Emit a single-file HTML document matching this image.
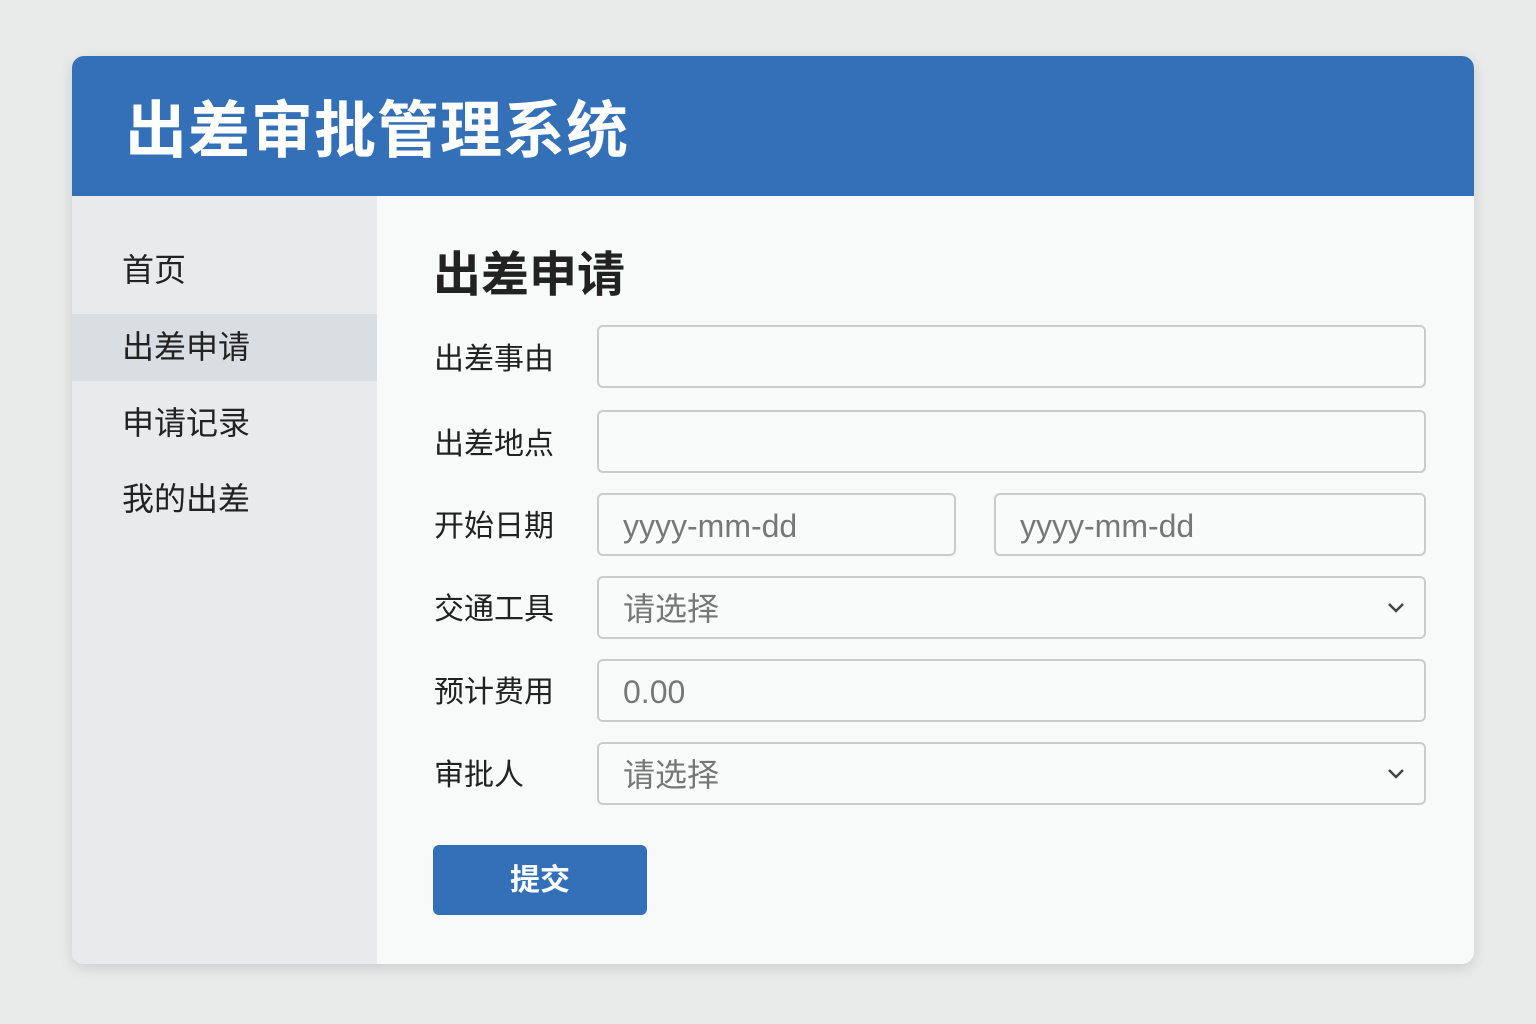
<!DOCTYPE html>
<html><head><meta charset="utf-8"><style>
*{margin:0;padding:0;box-sizing:border-box}
body{width:1536px;height:1024px;background:#e9eaea;font-family:"Liberation Sans","Noto Sans CJK SC",sans-serif;position:relative;overflow:hidden}
.card{position:absolute;left:72px;top:56px;width:1402px;height:908px;border-radius:12px;overflow:hidden;background:#f8f9f9;box-shadow:0 4px 14px rgba(0,0,0,.12)}
.hd{position:absolute;left:0;top:0;width:100%;height:140px;background:#3370b7}
.hd h1{position:absolute;left:53px;top:38px;font-size:62px;font-weight:bold;color:#fff;letter-spacing:1px;line-height:76px}
.sb{position:absolute;left:0;top:140px;width:305px;height:768px;background:#e8eaec}
.it{position:absolute;left:0;width:305px;height:67px;font-size:32px;line-height:67px;padding-left:50px;color:#222}
.act{background:#d9dee2}
.a{position:absolute;color:#222}
.lab{font-size:30px;left:434px}
.in{position:absolute;border:2px solid #c9cbcd;border-radius:6px;height:63px;background:#f9fafa;font-size:32px;color:#777;padding-left:24px;line-height:62px}
.chev{position:absolute;right:18px;top:22px}
.btn{position:absolute;left:433px;top:845px;width:214px;height:70px;background:#3370b7;border-radius:6px;color:#fff;font-size:30px;font-weight:bold;text-align:center;line-height:72px}
</style></head><body>
<div class="card">
<div class="hd"><h1>出差审批管理系统</h1></div>
<div class="sb">
<div class="it" style="top:41px">首页</div>
<div class="it act" style="top:118px">出差申请</div>
<div class="it" style="top:194px">申请记录</div>
<div class="it" style="top:270px">我的出差</div>
</div>
</div>
<div class="a" style="left:433px;top:246px;font-size:48px;font-weight:bold;line-height:60px">出差申请</div>
<div class="a lab" style="top:334px">出差事由</div>
<div class="a lab" style="top:419px">出差地点</div>
<div class="a lab" style="top:501px">开始日期</div>
<div class="a lab" style="top:584px">交通工具</div>
<div class="a lab" style="top:667px">预计费用</div>
<div class="a lab" style="top:750px">审批人</div>
<div class="in" style="left:597px;top:325px;width:829px"></div>
<div class="in" style="left:597px;top:410px;width:829px"></div>
<div class="in" style="left:597px;top:493px;width:359px">yyyy-mm-dd</div>
<div class="in" style="left:994px;top:493px;width:432px">yyyy-mm-dd</div>
<div class="in" style="left:597px;top:576px;width:829px">请选择<svg class="chev" width="20" height="14" viewBox="0 0 20 14"><path d="M3 4l7 7 7-7" fill="none" stroke="#444" stroke-width="2.5"/></svg></div>
<div class="in" style="left:597px;top:659px;width:829px">0.00</div>
<div class="in" style="left:597px;top:742px;width:829px">请选择<svg class="chev" width="20" height="14" viewBox="0 0 20 14"><path d="M3 4l7 7 7-7" fill="none" stroke="#444" stroke-width="2.5"/></svg></div>
<div class="btn">提交</div>
</body></html>
